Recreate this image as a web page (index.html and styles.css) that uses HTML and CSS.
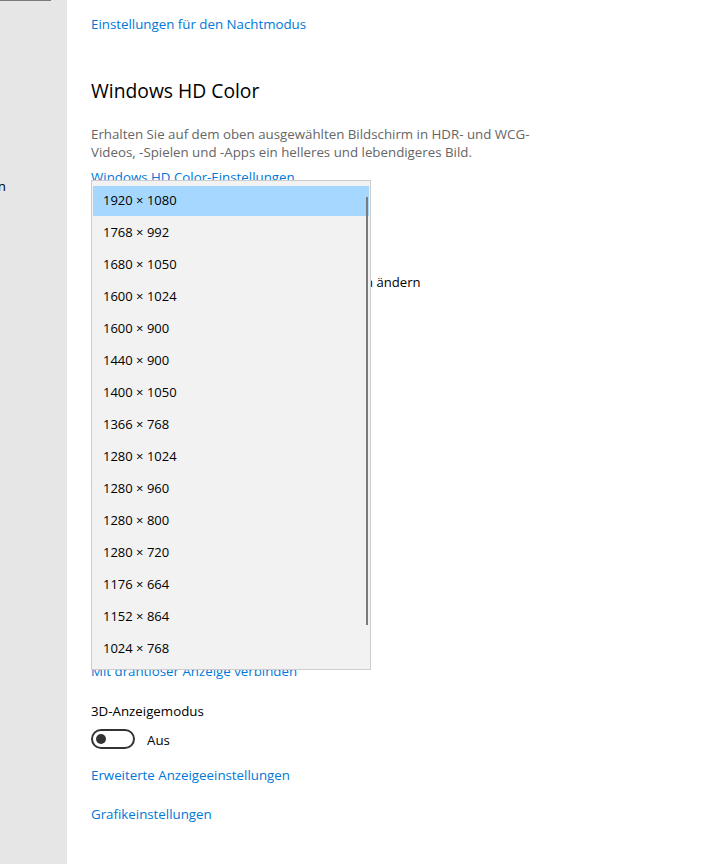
FILE: index.html
```html
<!DOCTYPE html>
<html lang="de">
<head>
<meta charset="utf-8">
<title>Anzeige</title>
<link rel="stylesheet" href="styles.css">
</head>
<body>
<div class="app">
  <aside class="sidebar">
    <div class="search-edge"></div>
    <div class="nav-item"><span>Benachrichtigungen und Aktionen</span></div>
  </aside>
  <main class="content">
    <a class="link first">Einstellungen für den Nachtmodus</a>
    <h2 class="title">Windows HD Color</h2>
    <p class="desc">Erhalten Sie auf dem oben ausgewählten Bildschirm in HDR- und WCG-Videos, -Spielen und -Apps ein helleres und lebendigeres Bild.</p>
    <a class="link after-desc">Windows HD Color-Einstellungen</a>

    <h2 class="title hidden-section">Skalierung und Anordnung</h2>
    <div class="label scale-label">Größe von Text, Apps und anderen Elementen ändern</div>
    <div class="combo">100% (Empfohlen)</div>
    <a class="link block-link">Erweiterte Skalierungseinstellungen</a>
    <div class="label">Bildschirmauflösung</div>
    <div class="combo">1920 × 1080 (Empfohlen)</div>
    <div class="label">Anzeigeausrichtung</div>
    <div class="combo">Querformat</div>
    <h2 class="title hidden-section">Mehrere Bildschirme</h2>

    <a class="link wireless">Mit drahtloser Anzeige verbinden</a>
    <div class="label mode3d">3D-Anzeigemodus</div>
    <div class="toggle-row">
      <span class="toggle"><span class="knob"></span></span>
      <span class="toggle-text">Aus</span>
    </div>
    <a class="link advanced">Erweiterte Anzeigeeinstellungen</a>
    <a class="link graphics">Grafikeinstellungen</a>

    <div class="popup">
      <ul class="options">
        <li class="option selected">1920 × 1080</li>
        <li class="option">1768 × 992</li>
        <li class="option">1680 × 1050</li>
        <li class="option">1600 × 1024</li>
        <li class="option">1600 × 900</li>
        <li class="option">1440 × 900</li>
        <li class="option">1400 × 1050</li>
        <li class="option">1366 × 768</li>
        <li class="option">1280 × 1024</li>
        <li class="option">1280 × 960</li>
        <li class="option">1280 × 800</li>
        <li class="option">1280 × 720</li>
        <li class="option">1176 × 664</li>
        <li class="option">1152 × 864</li>
        <li class="option">1024 × 768</li>
      </ul>
      <div class="scrollbar"></div>
    </div>
  </main>
</div>
</body>
</html>
```

FILE: styles.css
```css
html, body {
  margin: 0;
  padding: 0;
  background: #ffffff;
}

body {
  font-family: "Open Sans", "Noto Sans", "Liberation Sans", sans-serif;
  font-size: 13.3px;
  color: #000000;
  overflow: hidden;
}

.app {
  display: flex;
  min-height: 864px;
}

.sidebar {
  width: 67px;
  flex: 0 0 67px;
  background: #e6e6e6;
  overflow: hidden;
}

.search-edge {
  width: 51px;
  height: 1px;
  background: #7a7a7a;
}

.nav-item {
  margin-top: 175px;
  width: 6px;
  height: 20px;
  line-height: 20px;
  display: flex;
  justify-content: flex-end;
  white-space: nowrap;
  font-size: 13.3px;
  color: #000;
}

.content {
  position: relative;
  flex: 1;
  padding-left: 24px;
  display: flex;
  flex-direction: column;
  align-items: flex-start;
}

.link {
  display: block;
  color: #0078d7;
  line-height: 20px;
  font-size: 13.3px;
  cursor: pointer;
}

.first { margin-top: 14px; }

.title {
  margin: 43px 0 0;
  font-size: 19.3px;
  font-weight: normal;
  line-height: 28px;
  color: #000;
}

.desc {
  margin: 20px 0 0;
  width: 448px;
  font-size: 13.3px;
  line-height: 18px;
  color: #666666;
}

.after-desc { margin-top: 6px; }

.hidden-section { margin-top: 32px; }

.label {
  line-height: 20px;
  font-size: 13.3px;
  color: #000;
  margin-top: 24px;
  white-space: nowrap;
}

.scale-label {
  margin-top: 25px;
  font-size: 13.1px;
}

.combo {
  margin-top: 8px;
  box-sizing: border-box;
  width: 260px;
  height: 32px;
  line-height: 28px;
  padding-left: 10px;
  border: 2px solid #999;
}

.block-link { margin-top: 12px; }

.wireless { margin-top: 69px; }

.mode3d { margin-top: 20px; }

.toggle-row {
  margin-top: 8px;
  display: flex;
  align-items: center;
  gap: 12px;
  height: 20px;
}

.toggle {
  box-sizing: border-box;
  width: 44px;
  height: 20px;
  border: 2px solid #333333;
  border-radius: 10px;
  display: flex;
  align-items: center;
  padding-left: 3px;
}

.knob {
  width: 10px;
  height: 10px;
  border-radius: 50%;
  background: #333333;
}

.toggle-text {
  font-size: 13.3px;
  line-height: 20px;
  padding-top: 1px;
}

.advanced { margin-top: 16px; }

.graphics { margin-top: 19px; }

.popup {
  position: absolute;
  left: 24px;
  top: 180px;
  width: 280px;
  box-sizing: border-box;
  border: 1px solid #cccccc;
  background: #f2f2f2;
  padding: 4px 0;
}

.options {
  list-style: none;
  margin: 0;
  padding: 0;
}

.option {
  height: 32px;
  line-height: 30px;
  padding-bottom: 2px;
  box-sizing: border-box;
  padding-left: 11px;
  font-size: 13px;
  color: #000;
}

.option.selected {
  background: #a6d8ff;
  margin: 1px 1px;
  height: 30px;
  line-height: 29px;
  padding-bottom: 1px;
  padding-left: 10px;
}

.scrollbar {
  position: absolute;
  left: 274px;
  top: 16px;
  width: 2px;
  height: 428px;
  background: #7a7a7a;
}
```
